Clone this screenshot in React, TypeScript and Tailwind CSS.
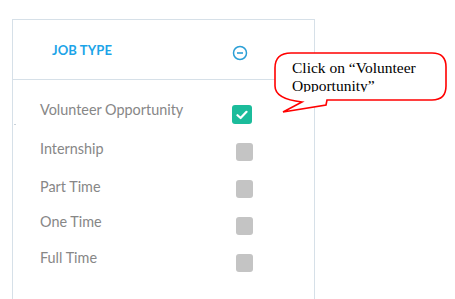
import React from "react";

const items = [
  { label: "Volunteer Opportunity", checked: true, off: "mt-[-9px]" },
  { label: "Internship", checked: false, off: "mt-[-6px]" },
  { label: "Part Time", checked: false, off: "mt-[-4px]" },
  { label: "One Time", checked: false, off: "mt-[-8px]" },
  { label: "Full Time", checked: false, off: "mt-[-9px]" },
];

export default function App() {
  return (
    <div className="relative h-[299px] w-[455px] overflow-hidden bg-white">
      <div className="ml-[12px] mt-[19px] flex h-[280px] w-[303px] flex-col border-l border-r border-t border-[#d6e0e8]">
        <div className="flex h-[60px] shrink-0 items-center justify-between border-b border-[#d6e0e8] pl-[39px] pr-[66px]">
          <span
            className="mt-[2px] text-[13px] font-bold tracking-[0.1px] text-[#1ca4e8]"
            style={{ fontFamily: "Lato, 'Open Sans', sans-serif" }}
          >
            JOB TYPE
          </span>
          <svg width="16" height="16" viewBox="0 0 16 16" className="mt-[6px]">
            <circle cx="8" cy="8" r="6.5" fill="none" stroke="#2b9fd6" strokeWidth="1.5" />
            <line x1="5" y1="8" x2="11" y2="8" stroke="#2b9fd6" strokeWidth="1.6" />
          </svg>
        </div>
        <div className="flex flex-col pt-[16px]">
          {items.map((it) => (
            <div key={it.label} className="flex h-[37px] items-center justify-between pl-[27px]">
              <span
                className={`${it.off} text-[14.4px] text-[#878787]`}
                style={{ fontFamily: "Lato, 'Open Sans', sans-serif" }}
              >
                {it.label}
              </span>
              {it.checked ? (
                <span className="mr-[62px] flex h-[19px] w-[20px] items-center justify-center rounded-[3px] bg-[#1bbc9b]">
                  <svg width="12" height="10" viewBox="0 0 12 10">
                    <path d="M1.5 5.2 L4.6 8 L10.5 1.8" fill="none" stroke="#ffffff" strokeWidth="2.2" strokeLinecap="round" strokeLinejoin="round" />
                  </svg>
                </span>
              ) : (
                <span className="mr-[61px] h-[18px] w-[17px] rounded-[3px] bg-[#c4c4c4]" />
              )}
            </div>
          ))}
        </div>
      </div>
      <span className="absolute left-[14px] top-[124px] h-[1px] w-[2px] bg-[#c9d2da]" />
      <svg className="absolute left-[270px] top-[45px]" width="185" height="75" viewBox="0 0 185 75">
        <path
          d="M57 55 L162 55 Q176 55 176 41 L176 22 Q176 8 162 8 L21 8 Q5 8 5 23 L5 41 Q5 54 32 57 L13 67 L56 60 Z"
          fill="#ffffff"
          stroke="#ff0000"
          strokeWidth="1.6"
          strokeLinejoin="miter"
        />
      </svg>
      <div
        className="absolute left-[292px] top-[59px] h-[33px] w-[140px] overflow-hidden text-[15.5px] leading-[18px] text-black"
        style={{ fontFamily: "'Liberation Serif', 'Times New Roman', serif" }}
      >
        Click on “Volunteer Opportunity”
      </div>
    </div>
  );
}
